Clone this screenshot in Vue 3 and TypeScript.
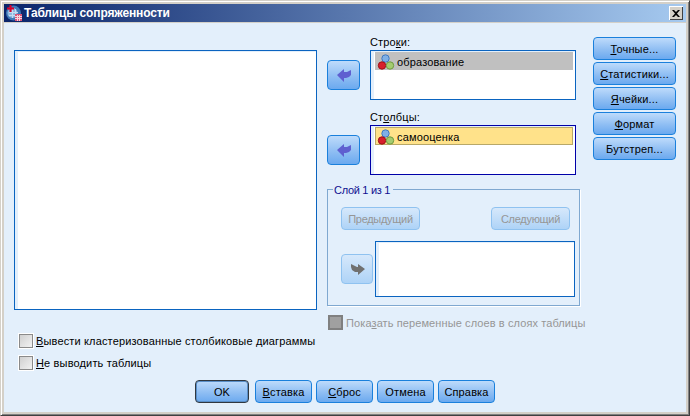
<script setup lang="ts">
const sideButtons = [
  { key: 'Т', rest: 'очные...' },
  { key: 'С', rest: 'татистики...' },
  { key: 'Я', rest: 'чейки...' },
  { key: 'Ф', rest: 'ормат' },
  { key: '', rest: 'Бутстреп...' },
];

const bottomButtons = [
  { key: '', rest: 'OK', main: true },
  { key: 'В', rest: 'ставка', main: false },
  { key: 'С', rest: 'брос', main: false },
  { key: '', rest: 'Отмена', main: false },
  { key: '', rest: 'Справка', main: false },
];
</script>

<template>
  <div class="window">
    <div class="titlebar">
      <svg class="app-icon" width="16" height="16" viewBox="0 0 16 16">
        <circle cx="7.500" cy="8" r="7.500" fill="#3f78b8" />
        <circle cx="6.500" cy="8" r="5" fill="#8fb8e0" />
        <path d="M3 7.500h9M3 10.500h9M6.500 4v9M9.500 4v9" stroke="#c4dcf2" stroke-width="1" />
        <path d="M4.500 0v7M1 3.500h7" stroke="#d8002a" stroke-width="2" />
        <rect x="9" y="9" width="7" height="7" fill="#d8547a" />
        <path d="M9 11.500h7M9 13.500h7M11.500 10v6M13.500 10v6" stroke="#f7d3dd" stroke-width="1" />
      </svg>
      <span class="title">Таблицы сопряженности</span>
      <button class="close-btn">
        <svg width="8" height="7" viewBox="0 0 8 7">
          <path d="M0 0h2l2 2 2-2h2L5 3.500 8 7H6L4 5 2 7H0l3-3.500z" fill="#000" />
        </svg>
      </button>
    </div>

    <div class="client">
      <div class="top">
        <div class="list source"></div>

        <div class="middle">
          <div class="target-row">
            <button class="blue-btn arrow-btn">
              <svg width="33" height="30" viewBox="0 0 33 30">
                <path d="M10 15l7-6v3h3l4-2v5l-2 2-3 1h-2v4z" fill="#5f5fd0" />
              </svg>
            </button>
            <div>
              <div class="label">Стро<u>к</u>и:</div>
              <div class="list target">
                <div class="var-row gray">
                  <svg class="var-icon" width="19" height="17" viewBox="0 0 19 17">
                    <circle cx="9.500" cy="5.500" r="3.700" fill="#7fb0e6" stroke="#3f78c0" />
                    <circle cx="6" cy="12.500" r="3.700" fill="#d8202c" stroke="#a01018" />
                    <circle cx="14" cy="12.500" r="3.700" fill="#a4cc70" stroke="#6f9a40" />
                  </svg>
                  <span>образование</span>
                </div>
              </div>
            </div>
          </div>

          <div class="target-row second">
            <button class="blue-btn arrow-btn">
              <svg width="33" height="30" viewBox="0 0 33 30">
                <path d="M10 15l7-6v3h3l4-2v5l-2 2-3 1h-2v4z" fill="#5f5fd0" />
              </svg>
            </button>
            <div>
              <div class="label">Ст<u>о</u>лбцы:</div>
              <div class="list target focused">
                <div class="var-row yellow">
                  <svg class="var-icon" width="19" height="17" viewBox="0 0 19 17">
                    <circle cx="9.500" cy="5.500" r="3.700" fill="#7fb0e6" stroke="#3f78c0" />
                    <circle cx="6" cy="12.500" r="3.700" fill="#d8202c" stroke="#a01018" />
                    <circle cx="14" cy="12.500" r="3.700" fill="#a4cc70" stroke="#6f9a40" />
                  </svg>
                  <span>самооценка</span>
                </div>
              </div>
            </div>
          </div>

          <div class="layer-group">
            <span class="legend">Слой 1 из 1</span>
            <div class="layer-nav">
              <button class="blue-btn off nav-btn">Предыдущий</button>
              <button class="blue-btn off nav-btn">Следующий</button>
            </div>
            <div class="layer-body">
              <button class="blue-btn off layer-arrow">
                <svg width="32" height="30" viewBox="0 0 32 30">
                  <path d="M10 10l4 2 2 1h1v-3l7 5-7 6v-3h-3l-3-2-1-3z" fill="#707070" />
                </svg>
              </button>
              <div class="list layer-list"></div>
            </div>
          </div>

          <div class="layer-check">
            <span class="check disabled"></span>
            <span>Пока<u>з</u>ать переменные слоев в слоях таблицы</span>
          </div>
        </div>

        <div class="side">
          <button v-for="b in sideButtons" :key="b.rest" class="blue-btn side-btn">
            <u v-if="b.key">{{ b.key }}</u>{{ b.rest }}
          </button>
        </div>
      </div>

      <div class="options">
        <label class="option"><span class="check"></span><span><u>В</u>ывести кластеризованные столбиковые диаграммы</span></label>
        <label class="option"><span class="check"></span><span><u>Н</u>е выводить таблицы</span></label>
      </div>

      <div class="actions">
        <button
          v-for="b in bottomButtons"
          :key="b.rest"
          class="blue-btn action-btn"
          :class="{ main: b.main }"
        >
          <u v-if="b.key">{{ b.key }}</u>{{ b.rest }}
        </button>
      </div>
    </div>
  </div>
</template>

<style>
html, body {
  margin: 0;
  padding: 0;
}
</style>

<style scoped>
.window {
  width: 690px;
  height: 416px;
  box-sizing: border-box;
  padding: 3px;
  background: #d4d0c8;
  border: 1px solid;
  border-color: #d4d0c8 #404040 #404040 #d4d0c8;
  box-shadow: inset 1px 1px 0 #fff, inset -1px -1px 0 #808080;
  display: flex;
  flex-direction: column;
  font-family: "Liberation Sans", Arial, sans-serif;
  font-size: 11px;
  letter-spacing: 0.15px;
  color: #000;
  overflow: hidden;
}

.titlebar {
  height: 18px;
  flex: none;
  display: flex;
  align-items: center;
  background: linear-gradient(to right, #0a246a, #a6caf0);
  margin-bottom: 1px;
}

.app-icon {
  flex: none;
  margin-left: 2px;
}

.title {
  margin-left: 2px;
  color: #fff;
  font-family: "Liberation Sans", sans-serif;
  font-weight: bold;
  font-size: 12px;
  letter-spacing: -0.15px;
  white-space: nowrap;
}

.close-btn {
  margin-left: auto;
  margin-right: 3px;
  width: 14px;
  height: 14px;
  padding: 0;
  display: flex;
  align-items: center;
  justify-content: center;
  background: #d4d0c8;
  border: none;
  box-shadow: inset 1px 1px 0 #fff, inset -1px -1px 0 #404040;
}

.client {
  flex: 1;
  background: #e3effb;
  min-height: 0;
}

.top {
  display: flex;
  height: 307px;
}

.list {
  box-sizing: border-box;
  background: #fff;
  border: 1px solid #0a64c0;
  box-shadow: inset 3px 1px 0 #e3effb;
}

.source {
  width: 303px;
  height: 260px;
  margin: 27px 10px 0;
  flex: none;
}

.middle {
  width: 253px;
  flex: none;
  margin-top: 13px;
}

.target-row {
  display: flex;
  gap: 10px;
}

.target-row.second {
  margin-top: 11px;
}

.label {
  height: 14px;
  line-height: 13px;
}

.target {
  width: 206px;
  height: 50px;
  padding: 1px 2px 0 4px;
}

.target.focused {
  border-color: #0000a8;
}

.var-row {
  height: 18px;
  display: flex;
  align-items: center;
  gap: 2px;
  box-sizing: border-box;
  padding-left: 1px;
}

.var-row span {
  position: relative;
  top: 1px;
}

.var-row.gray {
  background: #c0c0c0;
}

.var-row.yellow {
  background: #ffe28a;
  border: 1px solid #b8a868;
  padding-left: 0;
}

.var-icon {
  flex: none;
}

.blue-btn {
  box-sizing: border-box;
  padding: 0;
  border: 1px solid #1a80dc;
  border-radius: 4px;
  background: linear-gradient(to bottom, #bedbfb, #8fbef3 55%, #6ba9ef);
  font: inherit;
  letter-spacing: inherit;
  color: #000;
  white-space: nowrap;
}

.blue-btn.off {
  border-color: #8fc2f0;
  background: linear-gradient(to bottom, #d6e8fb, #aed3f7);
  color: #969696;
}

.arrow-btn {
  width: 33px;
  height: 30px;
  flex: none;
  margin-top: 24px;
  display: block;
}

.arrow-btn svg,
.layer-arrow svg {
  display: block;
  margin: -1px;
}

.layer-group {
  position: relative;
  box-sizing: border-box;
  height: 117px;
  margin-top: 14px;
  border: 1px solid #7fa8d0;
  box-shadow: 1px 1px 0 #fff;
  padding: 17px 9px 0 13px;
}

.legend {
  position: absolute;
  top: -6px;
  left: 5px;
  padding: 0 3px 0 1px;
  background: #e3effb;
  color: #101090;
  letter-spacing: -0.3px;
  line-height: 12px;
}

.layer-nav {
  display: flex;
  justify-content: space-between;
}

.nav-btn {
  width: 79px;
  height: 23px;
  letter-spacing: -0.3px;
}

.layer-body {
  display: flex;
  align-items: center;
  gap: 2px;
  margin-top: 11px;
}

.layer-arrow {
  width: 32px;
  height: 30px;
  flex: none;
}

.layer-list {
  width: 200px;
  height: 56px;
  flex: none;
}

.layer-check {
  display: flex;
  align-items: center;
  gap: 3px;
  height: 15px;
  margin-top: 9px;
  margin-left: 1px;
  color: #969696;
  letter-spacing: 0.1px;
  white-space: nowrap;
}

.check {
  display: block;
  box-sizing: border-box;
  width: 14px;
  height: 14px;
  flex: none;
  border: 1px solid #8a8a8a;
  outline: 1px solid #fff;
  background: linear-gradient(135deg, #d0d0d0, #f2f2f2);
}

.check.disabled {
  width: 15px;
  height: 15px;
  outline: none;
  border: 2px solid #808080;
  background: #a0a0a0;
}

.side {
  flex: none;
  width: 83px;
  margin: 14px 0 0 13px;
  display: flex;
  flex-direction: column;
  gap: 2px;
}

.side-btn {
  height: 23px;
}

.options {
  margin: 4px 0 0 15px;
  display: flex;
  flex-direction: column;
  gap: 8px;
}

.option {
  display: flex;
  align-items: center;
  gap: 3px;
  height: 14px;
  white-space: nowrap;
}

.actions {
  display: flex;
  gap: 4px;
  margin: 10px 0 0 191px;
}

.action-btn {
  width: 57px;
  height: 23px;
}

.action-btn.main {
  width: 54px;
  margin-right: 2px;
  border-color: #303840;
  box-shadow: inset 0 0 0 1px #5a8fc8;
}
</style>
